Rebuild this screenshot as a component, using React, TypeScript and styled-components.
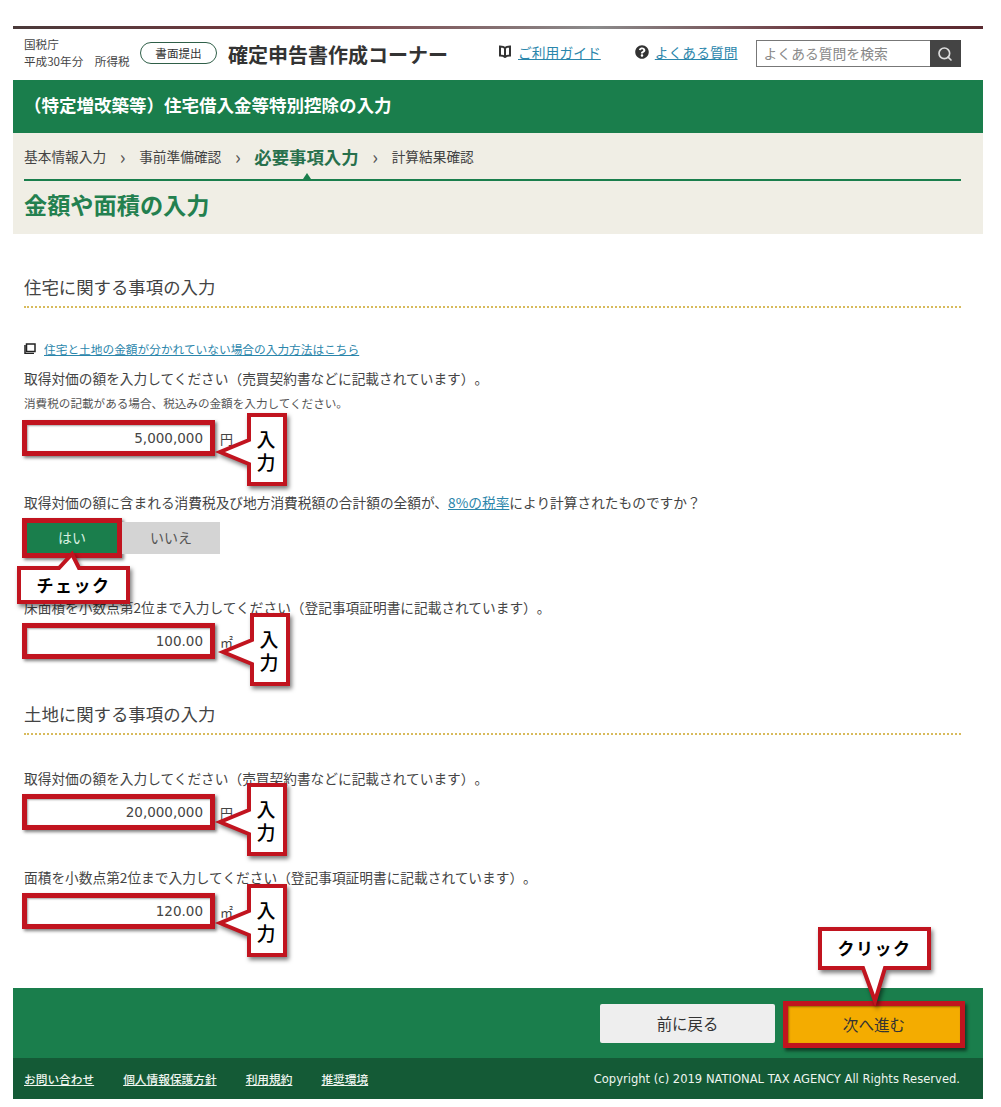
import React from "react";
import styled, { createGlobalStyle } from "styled-components";
import { FaQuestionCircle } from "react-icons/fa";
import { Search } from "lucide-react";

const GREEN = "#1a7e4c";
const RED = "#c1141f";
const SANS = `"Noto Sans CJK JP", "Noto Sans", sans-serif`;

const Global = createGlobalStyle`
  html, body { margin: 0; padding: 0; background: #fff; }
  body { font-family: ${SANS}; color: #444; text-spacing-trim: space-all; }
  * { box-sizing: border-box; }
`;

const Page = styled.div`
  width: 970px;
  min-height: 1107px;
  margin-left: 13px;
  padding-top: 26px;
`;
const TopRule = styled.div`
  height: 3px;
  background: linear-gradient(90deg, #4a3a3a, #7a3a40 30%, #8b8b8b 60%, #6a3038 85%, #5a2a30);
`;
const Header = styled.header`
  height: 51px;
  display: flex;
  align-items: center;
  padding: 0 22px 4px 11px;
  > * { flex: none; }
`;
const Agency = styled.div`
  width: 116px;
  font-size: 11.6px;
  line-height: 17px;
  color: #444;
  white-space: pre;
`;
const Pill = styled.div`
  width: 77px;
  height: 22px;
  border: 1px solid #2f5f48;
  border-radius: 11px;
  font-size: 11.6px;
  line-height: 20px;
  text-align: center;
  color: #333;
`;
const SiteTitle = styled.div`
  margin: 4px 0 0 11px;
  font-size: 20px;
  font-weight: 700;
  color: #333;
  white-space: nowrap;
`;
const HelpLink = styled.a<{ $left: number }>`
  display: flex;
  align-items: center;
  gap: 6px;
  margin: 0 0 2px ${(p) => p.$left}px;
  font-size: 13.8px;
  color: #2b86ab;
  white-space: nowrap;
  span { text-decoration: underline; }
  svg { color: #333; flex: none; }
`;
const SearchBox = styled.div`
  display: flex;
  margin: 2px 0 0 18px;
  height: 27px;
`;
const SearchField = styled.div`
  width: 174px;
  border: 1px solid #777;
  border-right: 0;
  padding-left: 7px;
  font-size: 13.8px;
  line-height: 24px;
  color: #888;
`;
const SearchButton = styled.div`
  width: 31px;
  background: #444;
  color: #ddd;
  display: flex;
  align-items: center;
  justify-content: center;
`;
const PageBand = styled.h1`
  margin: 0;
  height: 53px;
  background: ${GREEN};
  color: #fff;
  padding-left: 11px;
  font-size: 17.5px;
  font-weight: 700;
  line-height: 49px;
  white-space: nowrap;
`;
const Intro = styled.div`
  height: 101px;
  background: #f0eee5;
  padding: 0 22px 0 11px;
`;
const Steps = styled.div`
  position: relative;
  height: 48px;
  border-bottom: 2px solid ${GREEN};
  display: flex;
  align-items: center;
  font-size: 13.7px;
  color: #444;
  &::after {
    content: "";
    position: absolute;
    left: 279px;
    bottom: 0;
    border: 4px solid transparent;
    border-top: 0;
    border-bottom: 6px solid ${GREEN};
  }
`;
const Step = styled.span<{ $current?: boolean }>`
  white-space: nowrap;
  ${(p) => p.$current && `font-size: 17.4px; font-weight: 700; color: #27704c;`}
`;
const Chevron = styled.span`
  width: 33px;
  text-align: center;
  font-size: 19px;
  line-height: 20px;
  color: #555;
`;
const Title = styled.h2`
  margin: 0;
  font-size: 23.2px;
  font-weight: 700;
  line-height: 46px;
  color: #23804f;
`;
const Form = styled.main`
  padding: 0 22px 59px 11px;
`;
const Heading = styled.h3<{ $top: number }>`
  margin: ${(p) => p.$top}px 0 0;
  font-size: 17.4px;
  font-weight: 400;
  line-height: 24px;
  padding-bottom: 7px;
  border-bottom: 2px dotted #d8bb5c;
  color: #444;
`;
const GuideLink = styled.a`
  display: flex;
  align-items: center;
  gap: 8px;
  margin-top: 31px;
  height: 18px;
  font-size: 11.7px;
  color: #2b86ab;
  span { text-decoration: underline; }
  svg { color: #222; }
`;
const Label = styled.p<{ $top: number }>`
  margin: ${(p) => p.$top}px 0 0;
  font-size: 13.7px;
  line-height: 20px;
  color: #444;
  white-space: nowrap;
  a { color: #2b86ab; text-decoration: underline; }
`;
const Note = styled.p`
  margin: 7px 0 0;
  font-size: 11.6px;
  line-height: 16px;
  color: #555;
`;
const FieldRow = styled.div<{ $top: number }>`
  position: relative;
  display: flex;
  align-items: center;
  margin: ${(p) => p.$top}px 0 0 -2px;
  height: 36px;
`;
const Amount = styled.input`
  width: 193px;
  height: 36px;
  border: 5px solid ${RED};
  box-shadow: 2px 2px 3px rgba(0, 0, 0, 0.5), inset 1px 1px 2px rgba(0, 0, 0, 0.35);
  padding: 0 7px 0 0;
  outline: 0;
  text-align: right;
  font-family: "DejaVu Sans", sans-serif;
  font-size: 13.5px;
  color: #444;
  background: #fff;
`;
const Unit = styled.span`
  margin-left: 5px;
  font-size: 13px;
  color: #444;
`;
const Toggle = styled.div`
  position: relative;
  display: flex;
  align-items: center;
  margin: 6px 0 0 -2px;
  height: 40px;
`;
const YesButton = styled.div`
  width: 100px;
  height: 40px;
  border: 5px solid ${RED};
  background: ${GREEN};
  color: #d8f0e0;
  box-shadow: 2px 2px 3px rgba(0, 0, 0, 0.5);
  font-size: 14px;
  line-height: 29px;
  text-align: center;
`;
const NoButton = styled.div`
  width: 98px;
  height: 32px;
  background: #d4d4d4;
  color: #555;
  font-size: 14px;
  line-height: 31px;
  text-align: center;
`;
const CalloutBox = styled.div<{ $x: number; $y: number; $w: number; $h: number }>`
  position: absolute;
  z-index: 2;
  left: ${(p) => p.$x}px;
  top: ${(p) => p.$y}px;
  width: ${(p) => p.$w}px;
  height: ${(p) => p.$h}px;
  display: flex;
  align-items: center;
  justify-content: center;
  color: #000;
  svg {
    position: absolute;
    left: 0;
    top: 0;
    overflow: visible;
    filter: drop-shadow(2px 3px 2px rgba(0, 0, 0, 0.5));
  }
`;
const CalloutText = styled.span<{ $stack?: boolean }>`
  position: relative;
  font-weight: ${(p) => (p.$stack ? 500 : 700)};
  font-size: ${(p) => (p.$stack ? 19 : 17)}px;
  line-height: ${(p) => (p.$stack ? 23 : 20)}px;
  letter-spacing: ${(p) => (p.$stack ? 0 : 1.5)}px;
  width: ${(p) => (p.$stack ? "19px" : "auto")};
  margin-right: ${(p) => (p.$stack ? 2 : 0)}px;
  text-align: center;
  white-space: ${(p) => (p.$stack ? "normal" : "nowrap")};
`;

function Callout({ x, y, w, h, tail, stack, children }: {
  x: number; y: number; w: number; h: number;
  tail: "left" | "up" | "down"; stack?: boolean; children: React.ReactNode;
}) {
  const m = 2;
  const L = m, T = m, R = w - m, B = h - m;
  let d = "";
  if (tail === "left") {
    const c = Math.round(h * 0.53);
    d = `M${L} ${T}H${R}V${B}H${L}V${c + 12}L${L - 29} ${c}L${L} ${c - 12}Z`;
  } else if (tail === "up") {
    d = `M${L} ${T}H42L55 ${T - 14}L62 ${T}H${R}V${B}H${L}Z`;
  } else {
    d = `M${L} ${T}H${R}V${B}H67L57 ${B + 33}L45 ${B}H${L}Z`;
  }
  return (
    <CalloutBox $x={x} $y={y} $w={w} $h={h}>
      <svg width={w} height={h} viewBox={`0 0 ${w} ${h}`}>
        <path d={d} fill="#fff" stroke={RED} strokeWidth={4} strokeLinejoin="miter" />
      </svg>
      <CalloutText $stack={stack}>{children}</CalloutText>
    </CalloutBox>
  );
}

const ActionBar = styled.div`
  height: 70px;
  background: ${GREEN};
  display: flex;
  align-items: center;
  justify-content: flex-end;
  gap: 8px;
  padding-right: 18px;
`;
const BackButton = styled.div`
  width: 175px;
  height: 39px;
  background: #eeeeee;
  border-radius: 2px;
  color: #333;
  font-size: 15.4px;
  line-height: 38px;
  text-align: center;
`;
const NextButton = styled.div`
  position: relative;
  width: 182px;
  height: 47px;
  margin-top: 2px;
  border: 5px solid ${RED};
  background: #f4ac00;
  box-shadow: 2px 3px 3px rgba(0, 0, 0, 0.5), inset 1px 1px 2px rgba(0, 0, 0, 0.4);
  color: #333;
  font-size: 15.6px;
  line-height: 36px;
  text-align: center;
`;
const Footer = styled.footer`
  height: 41px;
  background: #145a36;
  display: flex;
  align-items: center;
  padding: 0 23px 0 11px;
  color: #eef5ef;
`;
const FooterLink = styled.a`
  margin-right: 29px;
  font-size: 11.7px;
  font-weight: 500;
  text-decoration: underline;
  white-space: nowrap;
`;
const Copyright = styled.span`
  margin-left: auto;
  font-family: "DejaVu Sans", sans-serif;
  font-size: 11.55px;
  white-space: nowrap;
`;

const BookIcon = () => (
  <svg width="14" height="13" viewBox="0 0 14 13" fill="none" stroke="currentColor" strokeWidth="2">
    <path d="M7 3C6 2 4 1.500 2 1.500V10.500C4 10.500 6 11 7 12C8 11 10 10.500 12 10.500V1.500C10 1.500 8 2 7 3V12" />
  </svg>
);
const WindowIcon = () => (
  <svg width="12" height="11" viewBox="0 0 12 11" fill="none" stroke="currentColor">
    <path d="M1 2V10.500H10" strokeWidth="1.500" />
    <rect x="2.500" y="1" width="8.500" height="7.500" strokeWidth="1.500" />
  </svg>
);

const leftTail = { w: 40, h: 73, tail: "left" as const, stack: true };

export default function App() {
  return (
    <Page>
      <Global />
      <TopRule />
      <Header>
        <Agency>{"国税庁\n平成30年分　所得税"}</Agency>
        <Pill>書面提出</Pill>
        <SiteTitle>確定申告書作成コーナー</SiteTitle>
        <HelpLink $left={50}><BookIcon /><span>ご利用ガイド</span></HelpLink>
        <HelpLink $left={34}><FaQuestionCircle size={14} /><span>よくある質問</span></HelpLink>
        <SearchBox>
          <SearchField>よくある質問を検索</SearchField>
          <SearchButton><Search size={16} strokeWidth={2.5} /></SearchButton>
        </SearchBox>
      </Header>
      <PageBand>（特定増改築等）住宅借入金等特別控除の入力</PageBand>
      <Intro>
        <Steps>
          <Step>基本情報入力</Step>
          <Chevron>›</Chevron>
          <Step>事前準備確認</Step>
          <Chevron>›</Chevron>
          <Step $current>必要事項入力</Step>
          <Chevron>›</Chevron>
          <Step>計算結果確認</Step>
        </Steps>
        <Title>金額や面積の入力</Title>
      </Intro>
      <Form>
        <Heading $top={41}>住宅に関する事項の入力</Heading>
        <GuideLink><WindowIcon /><span>住宅と土地の金額が分かれていない場合の入力方法はこちら</span></GuideLink>
        <Label $top={11}>取得対価の額を入力してください（売買契約書などに記載されています）。</Label>
        <Note>消費税の記載がある場合、税込みの金額を入力してください。</Note>
        <FieldRow $top={9}>
          <Amount readOnly value="5,000,000" />
          <Unit>円</Unit>
          <Callout x={225} y={-7} {...leftTail}>入力</Callout>
        </FieldRow>
        <Label $top={36}>取得対価の額に含まれる消費税及び地方消費税額の合計額の全額が、<a>8%の税率</a>により計算されたものですか？</Label>
        <Toggle>
          <YesButton>はい</YesButton>
          <NoButton>いいえ</NoButton>
          <Callout x={-5} y={48} w={113} h={38} tail="up">チェック</Callout>
        </Toggle>
        <Label $top={39}>床面積を小数点第2位まで入力してください（登記事項証明書に記載されています）。</Label>
        <FieldRow $top={6}>
          <Amount readOnly value="100.00" />
          <Unit>㎡</Unit>
          <Callout x={228} y={-10} {...leftTail}>入力</Callout>
        </FieldRow>
        <Heading $top={43}>土地に関する事項の入力</Heading>
        <Label $top={33}>取得対価の額を入力してください（売買契約書などに記載されています）。</Label>
        <FieldRow $top={6}>
          <Amount readOnly value="20,000,000" />
          <Unit>円</Unit>
          <Callout x={225} y={-11} {...leftTail}>入力</Callout>
        </FieldRow>
        <Label $top={37}>面積を小数点第2位まで入力してください（登記事項証明書に記載されています）。</Label>
        <FieldRow $top={6}>
          <Amount readOnly value="120.00" />
          <Unit>㎡</Unit>
          <Callout x={225} y={-9} {...leftTail}>入力</Callout>
        </FieldRow>
      </Form>
      <ActionBar>
        <BackButton>前に戻る</BackButton>
        <NextButton>
          次へ進む
          <Callout x={30} y={-79} w={113} h={43} tail="down">クリック</Callout>
        </NextButton>
      </ActionBar>
      <Footer>
        <FooterLink>お問い合わせ</FooterLink>
        <FooterLink>個人情報保護方針</FooterLink>
        <FooterLink>利用規約</FooterLink>
        <FooterLink>推奨環境</FooterLink>
        <Copyright>Copyright (c) 2019 NATIONAL TAX AGENCY All Rights Reserved.</Copyright>
      </Footer>
    </Page>
  );
}
